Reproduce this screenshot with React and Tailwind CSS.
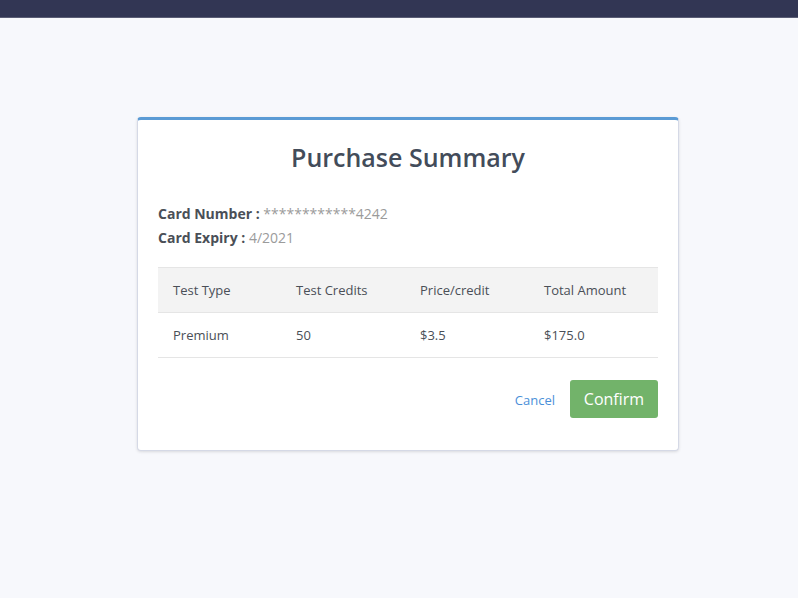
export default function App() {
  const font = { fontFamily: '"Open Sans", "Noto Sans", sans-serif' };
  return (
    <div className="min-h-[598px] bg-[#f7f8fc] flex flex-col" style={font}>
      <div className="h-[18px] bg-[#323654] border-b border-[#5a5d75]" />
      <div className="flex justify-center pt-[99px] pl-[18px]">
        <div className="w-[542px] bg-white rounded-[4px] border border-[#d5d9e6] border-t-[3px] border-t-[#5b9bd5] shadow-[0_1px_3px_rgba(0,0,0,0.12)] px-[20px] pt-[20px] pb-[32px]">
          <h1 className="text-center text-[25px] leading-[34px] text-[#434c5a] font-semibold">Purchase Summary</h1>
          <div className="mt-[28px] text-[14px] leading-[24px]">
            <div>
              <span className="font-bold text-[#4a4f57]">Card Number : </span>
              <span className="text-[#9b9b9b]">************4242</span>
            </div>
            <div>
              <span className="font-bold text-[#4a4f57]">Card Expiry : </span>
              <span className="text-[#9b9b9b]">4/2021</span>
            </div>
          </div>
          <table className="w-full mt-[17px] text-[13px] text-[#4a4f57] border-collapse table-fixed">
            <thead>
              <tr className="bg-[#f3f3f3] border-y border-[#e5e5e5]">
                <th className="w-[123px] text-left font-normal h-[45px] pl-[15px] pt-[2px]">Test Type</th>
                <th className="w-[124px] text-left font-normal pl-[15px] pt-[2px]">Test Credits</th>
                <th className="w-[124px] text-left font-normal pl-[15px] pt-[2px]">Price/credit</th>
                <th className="text-left font-normal pl-[15px] pt-[2px]">Total Amount</th>
              </tr>
            </thead>
            <tbody>
              <tr className="border-b border-[#e5e5e5]">
                <td className="h-[45px] pl-[15px] pt-[2px]">Premium</td>
                <td className="pl-[15px] pt-[2px]">50</td>
                <td className="pl-[15px] pt-[2px]">$3.5</td>
                <td className="pl-[15px] pt-[2px]">$175.0</td>
              </tr>
            </tbody>
          </table>
          <div className="flex justify-end items-center mt-[22px] gap-[15px]">
            <button className="text-[13px] text-[#4a90d9] pt-[4px]">Cancel</button>
            <button className="h-[38px] w-[88px] rounded-[3px] bg-[#72b36a] text-white text-[16px]">Confirm</button>
          </div>
        </div>
      </div>
    </div>
  );
}
